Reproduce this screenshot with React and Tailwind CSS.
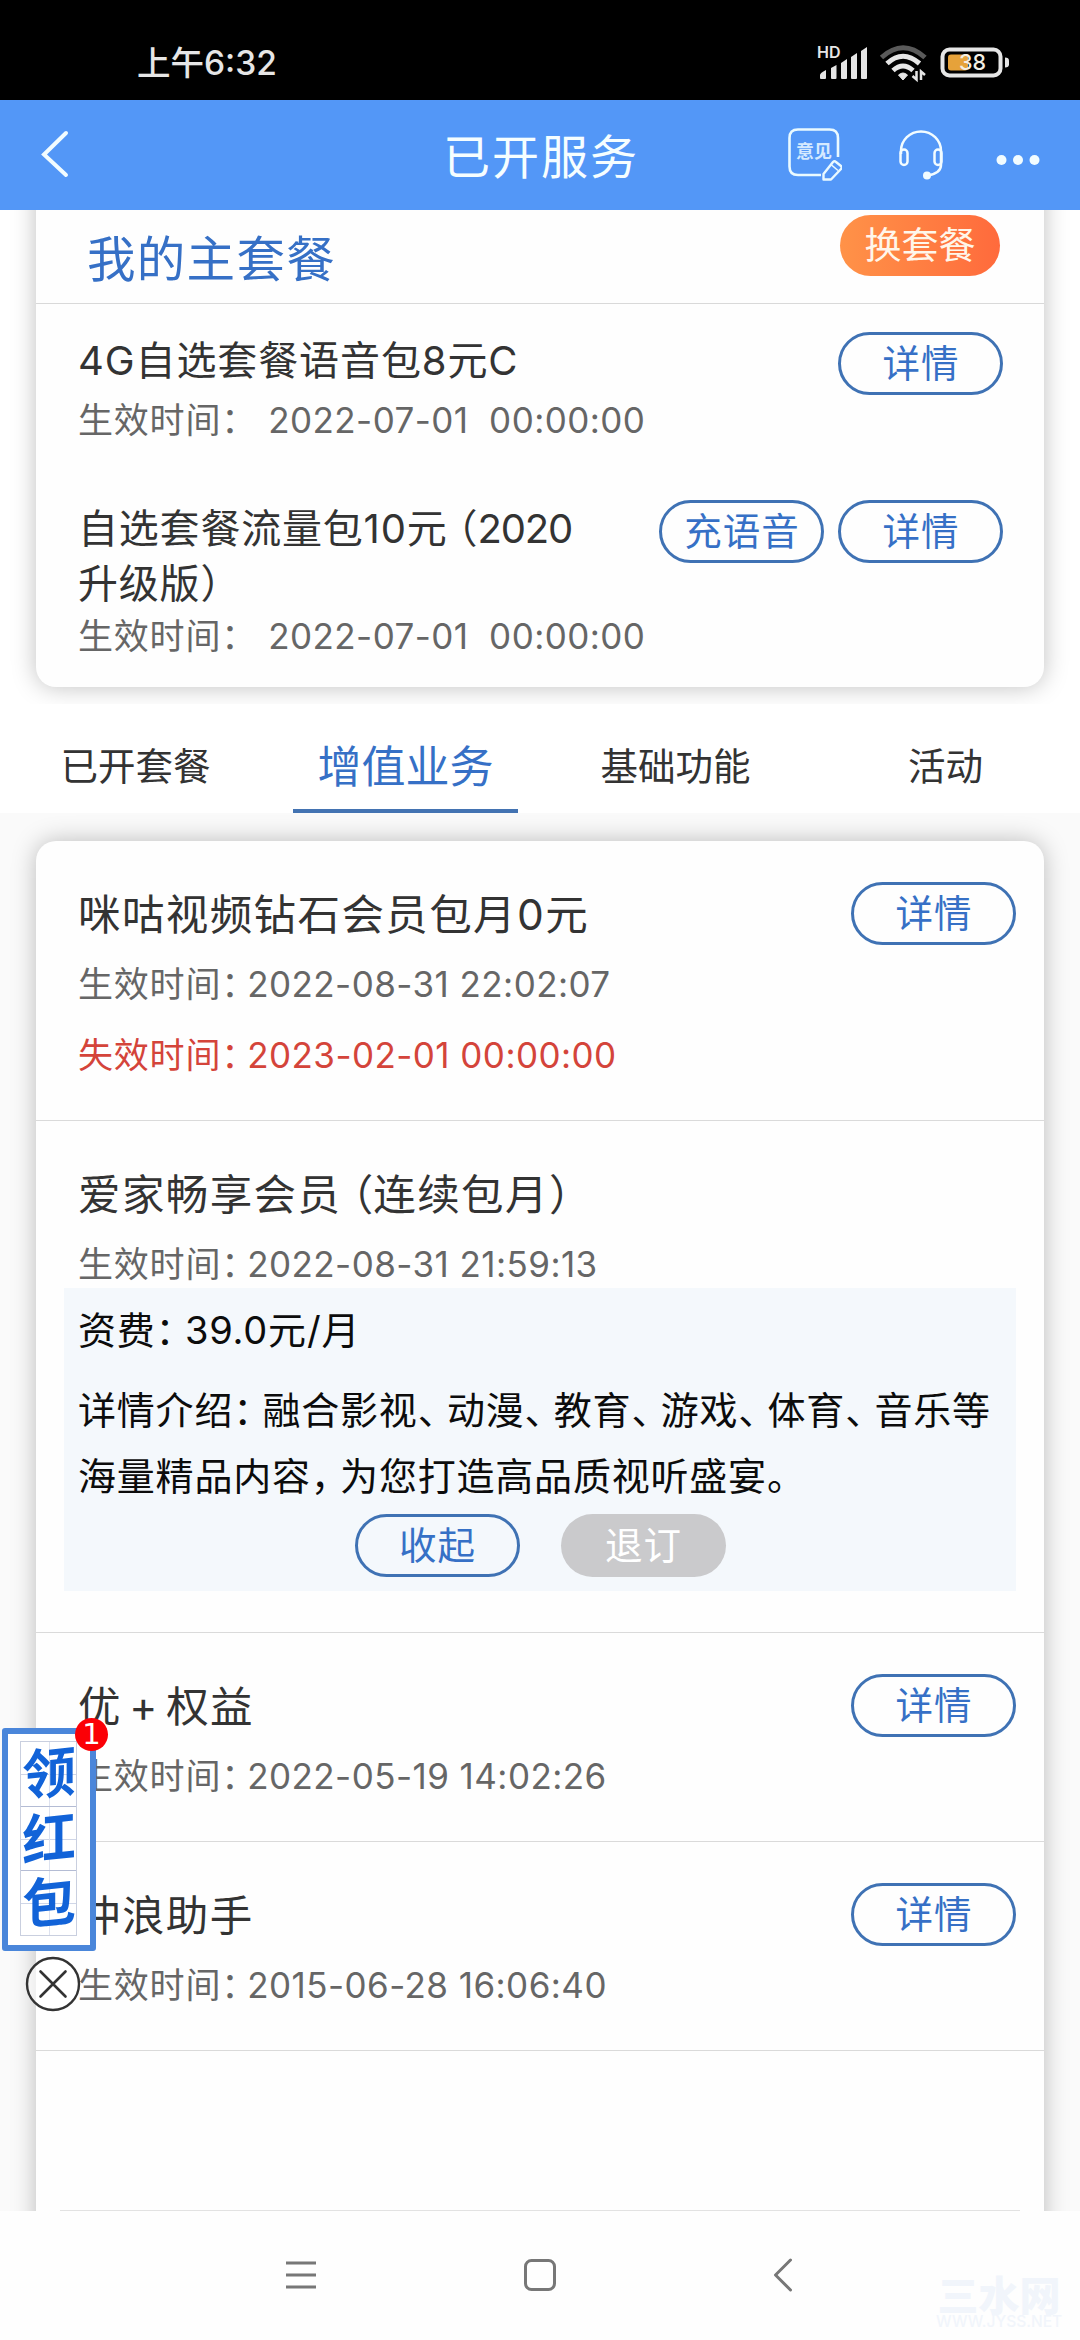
const pieces = /([：、，。（）]|\d{4})/;

const tabs = [
  { key: 'plan', label: '已开套餐' },
  { key: 'value', label: '增值业务' },
  { key: 'basic', label: '基础功能' },
  { key: 'activity', label: '活动' },
];

// Full-width punctuation is set half-width plus a small gap, so it takes about 0.77em.
function Han({ children }) {
  return children.split(pieces).map((part, i) => {
    if (!pieces.test(part)) return part;
    if (part.length > 1) {
      return (
        <span key={i} className="tracking-[-1.2px]">
          {part}
        </span>
      );
    }
    return (
      <span
        key={i}
        className={
          part === '（'
            ? "ml-[0.25em] tracking-normal [font-feature-settings:'halt']"
            : "tracking-[0.27em] [font-feature-settings:'halt']"
        }
      >
        {part}
      </span>
    );
  });
}

function PillButton({ children, disabled }) {
  return (
    <button
      type="button"
      disabled={disabled}
      className={`flex h-[63px] w-[165px] shrink-0 items-center justify-center rounded-full pt-px pl-px text-[37.5px] leading-none tracking-[1px] ${
        disabled ? 'bg-[#cacacc] text-white' : 'border-[3px] border-[#3f72b4] text-[#3670c6]'
      }`}
    >
      {children}
    </button>
  );
}

function TimeRow({ label = '生效时间', value, expired, wide, className = '' }) {
  return (
    <p
      className={`flex items-center whitespace-pre text-[35px] tracking-[0.8px] ${
        expired ? 'text-[#d4443a]' : 'text-[#666]'
      } ${className}`}
    >
      <span>{label}</span>
      <span className={`[font-feature-settings:'halt'] ${wide ? 'w-[47px]' : 'w-[26px]'}`}>：</span>
      <span className="tracking-[0.45px]">{value}</span>
    </p>
  );
}

function ServiceItem({ title, start, end, action = true, children }) {
  return (
    <li className="border-b border-[#dadada] pt-[43px] pb-[41px]">
      <div className="flex h-[60px] items-start justify-between pr-7 pl-[42px]">
        <h3 className="pt-px text-[42.5px] leading-[60px] tracking-[1.4px] text-[#333] [word-spacing:-6px]">
          <Han>{title}</Han>
        </h3>
        {action && (
          <div className="-mt-0.5">
            <PillButton>详情</PillButton>
          </div>
        )}
      </div>
      <TimeRow value={start} className="mt-4 h-12 pl-[42px]" />
      {end && (
        <TimeRow label="失效时间" value={end} expired className="mt-[23px] h-12 pl-[42px]" />
      )}
      {children}
    </li>
  );
}

function StatusBar() {
  return (
    <div className="flex h-[100px] items-center justify-between bg-black pt-[27px] pr-[67px] pl-[137px] text-[#e6e6e6]">
      <span className="text-[33.5px] leading-none font-medium">上午6:32</span>
      <svg width="196" height="38" viewBox="0 0 196 38" fill="none" className="-mt-px overflow-visible">
        <text x="0" y="13.5" fontSize="16" fontWeight="600" fill="#e6e6e6" fontFamily="Inter">
          HD
        </text>
        <g fill="#e6e6e6">
          <path d="M3 34v-3q0-2 6-5v8q0 1-1 1H4q-1 0-1-1z" />
          <path d="M14 34V24l5.500-3V34q0 1-1 1H15q-1 0-1-1z" />
          <path d="M24 34V19l6-4V34q0 1-1 1H25q-1 0-1-1z" />
          <path d="M34 34V13l6-4V34q0 1-1 1H35q-1 0-1-1z" />
          <path d="M44 34V7l6-4V34q0 1-1 1H45q-1 0-1-1z" />
        </g>
        <path d="M64.500 13.500Q86-6 108 13.500" stroke="#5a5a5a" strokeWidth="5" />
        <path d="M70 19.500Q86 5 102.500 19.500" stroke="#e6e6e6" strokeWidth="5" />
        <path d="M76 26.500Q86 17.500 96 26.500" stroke="#e6e6e6" strokeWidth="5" />
        <path d="M81.500 31q4.500-4 9 0l-4.500 5z" fill="#e6e6e6" stroke="#e6e6e6" strokeLinejoin="round" />
        <path d="M99.500 27v8.500l-4-3.500M104 36V27.500l4 3.500" stroke="#e6e6e6" strokeWidth="2.500" />
        <rect x="125.500" y="5.500" width="58" height="26" rx="7" stroke="#e6e6e6" strokeWidth="4" />
        <rect x="131" y="10.500" width="20" height="16" rx="3" fill="#e6a23a" />
        <text x="142" y="26" fontSize="21.500" fontWeight="500" fill="#f4efe4" fontFamily="Inter">
          38
        </text>
        <path d="M188 13.500q4 0 4 3v4q0 3-4 3z" fill="#e6e6e6" />
      </svg>
    </div>
  );
}

function FeedbackIcon() {
  return (
    <svg width="58" height="58" viewBox="0 0 58 58" fill="none" stroke="#eafaff" className="-mt-1">
      <path d="M54 33V14q0-8.500-8.500-8.500H14q-8.500 0-8.500 8.500v28.500q0 8.500 8.500 8.500h23" strokeWidth="2.600" />
      <text x="12" y="34" fontSize="18" fontWeight="700" fill="#d5eaff" stroke="none">
        意见
      </text>
      <path
        d="M39.500 55.500V50l9.500-12q1.500-1.500 3 0l5 4q1.500 1.500 0 3l-10 10.500z"
        strokeWidth="2.400"
        strokeLinejoin="round"
      />
      <path d="M47.500 41l6.500 5.500" strokeWidth="1.600" />
    </svg>
  );
}

function HeadsetIcon() {
  return (
    <svg
      width="48"
      height="52"
      viewBox="0 0 48 52"
      fill="none"
      stroke="#f2fcff"
      strokeWidth="2.500"
      className="ml-[55px]"
    >
      <path d="M4 25v-3a20 19.500 0 0 1 40 0v14q0 8-13 10.500" />
      <rect x="3.500" y="20.500" width="7" height="15.500" rx="3.500" />
      <rect x="37.500" y="20.500" width="7" height="15.500" rx="3.500" />
      <circle cx="30" cy="46.500" r="4" fill="#f2fcff" stroke="none" />
    </svg>
  );
}

function Header() {
  return (
    <header className="relative z-10 grid h-[110px] grid-cols-[1fr_auto_1fr] items-center bg-[#5397f7] pr-10 pl-10">
      <svg width="30" height="50" viewBox="0 0 30 50" fill="none" className="-mt-0.5">
        <path d="M26 4L4 25.500L26 46" stroke="#f2fcff" strokeWidth="4" strokeLinecap="round" />
      </svg>
      <h1 className="pt-0.5 pl-0.5 text-[47px] leading-none tracking-[2px] text-[#f6feff]">
        已开服务
      </h1>
      <div className="flex items-center justify-end">
        <FeedbackIcon />
        <HeadsetIcon />
        <svg width="44" height="12" viewBox="0 0 44 12" fill="#f2fcff" className="mt-2.5 ml-[51px]">
          <circle cx="5.500" cy="6" r="5" />
          <circle cx="22" cy="6" r="5" />
          <circle cx="38.500" cy="6" r="5" />
        </svg>
      </div>
    </header>
  );
}

function MainPlan() {
  return (
    <section className="h-[494px] overflow-hidden bg-white px-9">
      <div className="-mt-10 h-[517px] rounded-[20px] bg-[#fefefe] pt-10 shadow-[0_0_24px_rgba(0,0,0,0.25)]">
        <div className="flex h-[94px] items-start justify-between border-b border-[#d9d9d9] pr-11 pl-[51px]">
          <h2 className="pt-[25px] text-[48.5px] leading-[50px] tracking-[1.3px] text-[#3670c6]">
            我的主套餐
          </h2>
          <button
            type="button"
            className="mt-[5px] h-[61px] w-[160px] rounded-full bg-linear-to-r from-[#ff9248] to-[#ff6a3c] text-[37px] leading-none text-[#fff6ea]"
          >
            换套餐
          </button>
        </div>

        <div className="flex items-start justify-between pt-7 pr-[41px] pl-[42px]">
          <div className="pt-px">
            <h3 className="text-[40px] leading-[55px] tracking-[0.9px] text-[#333]">
              4G自选套餐语音包8元C
            </h3>
            <TimeRow value="2022-07-01  00:00:00" wide className="mt-3 h-10" />
          </div>
          <PillButton>详情</PillButton>
        </div>

        <div className="mt-[60px] flex items-start justify-between pr-[41px] pl-[42px]">
          <div className="w-[570px] pt-px">
            <h3 className="text-[40px] leading-[55px] tracking-[0.8px] text-[#333]">
              <Han>自选套餐流量包10元（2020</Han>
              <br />
              <Han>升级版）</Han>
            </h3>
            <TimeRow value="2022-07-01  00:00:00" wide className="mt-[5px] h-10" />
          </div>
          <div className="flex gap-3.5">
            <PillButton>充语音</PillButton>
            <PillButton>详情</PillButton>
          </div>
        </div>
      </div>
    </section>
  );
}

function TabBar({ active }) {
  return (
    <nav className="relative flex h-[109px] bg-white">
      {tabs.map((tab) => (
        <div key={tab.key} className="flex w-[270px] justify-center">
          <span
            className={`flex h-full w-[225px] items-center justify-center border-b-4 pt-[21px] pl-px leading-none whitespace-nowrap ${
              tab.key === active
                ? 'border-[#4373b2] text-[44px] text-[#3670c6]'
                : 'border-transparent text-[37.5px] text-[#333]'
            }`}
          >
            {tab.label}
          </span>
        </div>
      ))}
    </nav>
  );
}

function RedPacket() {
  return (
    <div className="absolute top-[1718px] left-0.5 z-20">
      <div className="relative mt-2.5 h-[223px] w-[94px] rounded-[3px] border-[6px] border-[#4a86da] bg-white px-3 py-[7px]">
        <div className="flex h-[195px] w-[57px] flex-col border border-[#c9cfdf]">
          {['领', '红', '包'].map((char) => (
            <div
              key={char}
              className="relative flex flex-1 items-center justify-center border-b border-[#b4bcd4] last:border-b-0"
            >
              <span className="absolute inset-x-0 top-1/2 h-px bg-[#cfd6e8]" />
              <span className="absolute inset-y-0 left-1/2 w-px bg-[#dde2ef]" />
              <span className="relative -skew-x-6 -rotate-6 text-[54px] leading-none font-bold text-[#1263d8]">
                {char}
              </span>
            </div>
          ))}
        </div>
      </div>
      <span className="absolute top-0 left-[73px] flex size-[33px] items-center justify-center rounded-full bg-[#fb0006] font-['DejaVu_Sans'] text-[29px] leading-none text-white">
        1
      </span>
      <svg width="56" height="56" viewBox="0 0 56 56" fill="none" stroke="#333" className="mt-[5px] ml-[23px]">
        <circle cx="28" cy="28" r="26" fill="#fff" fillOpacity="0.6" strokeWidth="2.400" />
        <path d="M15.500 15.500l25 25M40.500 15.500l-25 25" strokeWidth="2.600" strokeLinecap="round" />
      </svg>
    </div>
  );
}

function NavBar() {
  return (
    <footer className="relative flex h-[129px] items-start justify-between bg-[#fefefe] px-[284px] pt-[46px]">
      <svg width="36" height="36" viewBox="0 0 36 36" stroke="#777" strokeWidth="3">
        <path d="M2 6h30M2 18h30M2 30h30" />
      </svg>
      <svg width="36" height="36" viewBox="0 0 36 36" fill="none" stroke="#777" strokeWidth="3">
        <rect x="3.500" y="3.500" width="29" height="29" rx="6" />
      </svg>
      <svg width="36" height="36" viewBox="0 0 36 36" fill="none" stroke="#777" strokeWidth="3">
        <path d="M30.500 3L15.500 18L30.500 33" strokeLinecap="round" strokeLinejoin="round" />
      </svg>
      <div className="absolute top-[65px] right-[18px] w-[126px] text-center text-[#f1f5fb]">
        <div className="text-[41px] leading-[40px] font-black">三水网</div>
        <div className="text-[15.500px] leading-[12px] font-medium">WWW.JYSS.NET</div>
      </div>
    </footer>
  );
}

export default function App() {
  return (
    <div className="relative h-[2340px] w-[1080px] overflow-hidden bg-white font-['Inter','Noto_Sans_CJK_SC',sans-serif]">
      <StatusBar />
      <Header />
      <MainPlan />
      <TabBar active="value" />

      <main className="h-[1398px] overflow-hidden bg-[#fafafa] px-9 pt-7">
        <div className="flex h-[1400px] flex-col rounded-t-[20px] bg-[#fefefe] shadow-[0_0_24px_rgba(0,0,0,0.25)]">
          <ul>
            <ServiceItem
              title="咪咕视频钻石会员包月0元"
              start="2022-08-31 22:02:07"
              end="2023-02-01 00:00:00"
            />
            <ServiceItem title="爱家畅享会员（连续包月）" start="2022-08-31 21:59:13" action={false}>
              <div className="mx-7 h-[303px] bg-[#f4f8fc] px-3.5 pt-[9px] text-[38px] leading-[66px] tracking-[0.8px] text-[#0c0c0c]">
                <p>
                  <Han>资费：39.0元/月</Han>
                </p>
                <p className="mt-3.5">
                  <Han>
                    详情介绍：融合影视、动漫、教育、游戏、体育、音乐等海量精品内容，为您打造高品质视听盛宴。
                  </Han>
                </p>
                <div className="mt-[5px] flex justify-center gap-[41px]">
                  <PillButton>收起</PillButton>
                  <PillButton disabled>退订</PillButton>
                </div>
              </div>
            </ServiceItem>
            <ServiceItem title="优 + 权益" start="2022-05-19 14:02:26" />
            <ServiceItem title="冲浪助手" start="2015-06-28 16:06:40" />
          </ul>
          <div className="mx-6 mt-[159px] h-px bg-[#e2e2e2]" />
        </div>
      </main>

      <NavBar />
      <RedPacket />
    </div>
  );
}
